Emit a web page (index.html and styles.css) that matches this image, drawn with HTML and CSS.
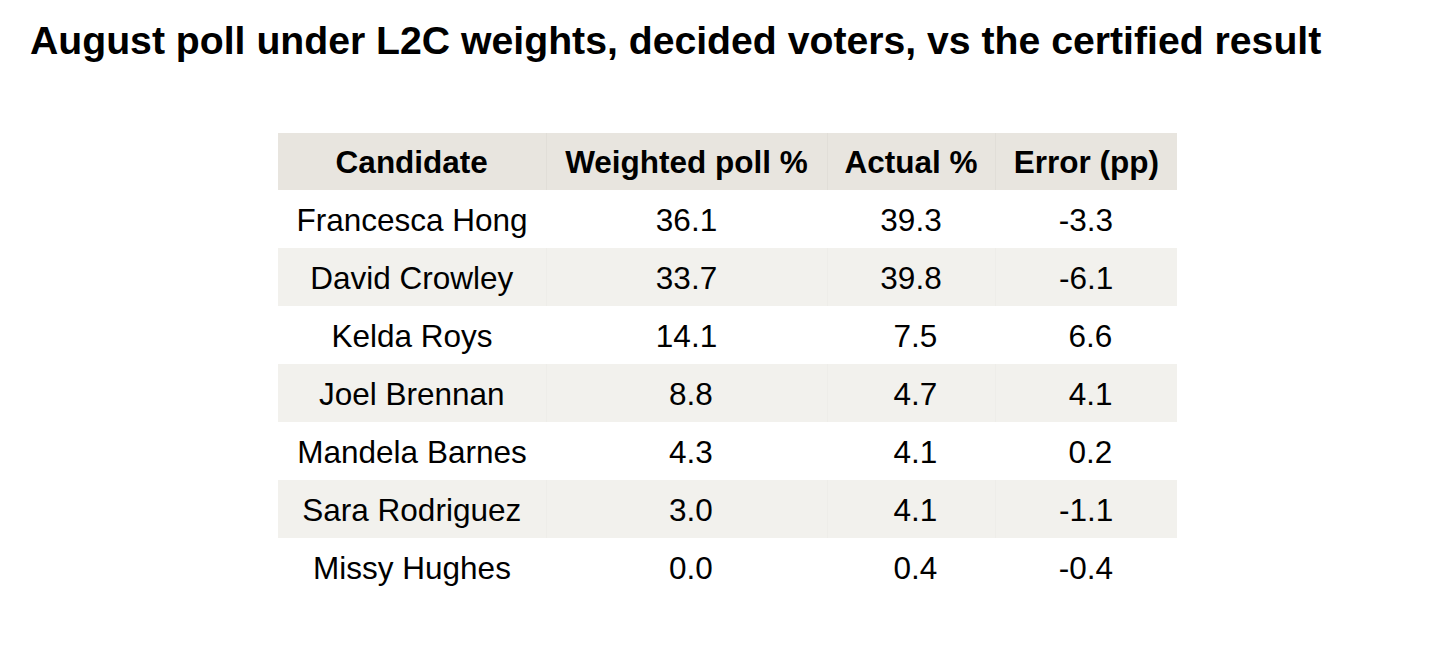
FILE: index.html
```html
<!DOCTYPE html>
<html lang="en">
<head>
<meta charset="utf-8">
<title>August poll under L2C weights</title>
<link rel="stylesheet" href="styles.css">
</head>
<body>
<h1 class="title">August poll under L2C weights, decided voters, vs the certified result</h1>
<table class="results">
  <colgroup>
    <col class="c-name">
    <col class="c-poll">
    <col class="c-actual">
    <col class="c-error">
  </colgroup>
  <thead>
    <tr><th>Candidate</th><th>Weighted poll %</th><th>Actual %</th><th>Error (pp)</th></tr>
  </thead>
  <tbody>
    <tr><td>Francesca Hong</td><td>36.1</td><td>39.3</td><td>-3.3</td></tr>
    <tr><td>David Crowley</td><td>33.7</td><td>39.8</td><td>-6.1</td></tr>
    <tr><td>Kelda Roys</td><td>14.1</td><td>&nbsp;7.5</td><td>&nbsp;6.6</td></tr>
    <tr><td>Joel Brennan</td><td>&nbsp;8.8</td><td>&nbsp;4.7</td><td>&nbsp;4.1</td></tr>
    <tr><td>Mandela Barnes</td><td>&nbsp;4.3</td><td>&nbsp;4.1</td><td>&nbsp;0.2</td></tr>
    <tr><td>Sara Rodriguez</td><td>&nbsp;3.0</td><td>&nbsp;4.1</td><td>-1.1</td></tr>
    <tr><td>Missy Hughes</td><td>&nbsp;0.0</td><td>&nbsp;0.4</td><td>-0.4</td></tr>
  </tbody>
</table>
</body>
</html>
```
FILE: styles.css
```css
html, body {
  margin: 0;
  padding: 0;
  background: #ffffff;
}
body {
  font-family: "Liberation Sans", Arial, Helvetica, sans-serif;
  color: #000;
}
.title {
  margin: 0;
  padding: 17px 0 0 30px;
  font-size: 39.2px;
  line-height: 48px;
  font-weight: 700;
  letter-spacing: 0;
}
.results {
  margin: 68px 0 0 278px;
  border-collapse: collapse;
  table-layout: fixed;
  width: 899px;
  font-size: 31.5px;
}
.c-name { width: 268px; }
.c-poll { width: 281px; }
.c-actual { width: 168px; }
.c-error { width: 182px; }
.results th, .results td {
  height: 58px;
  padding: 2px 0 0;
  box-sizing: border-box;
  text-align: center;
  vertical-align: middle;
  white-space: pre;
}
.results th {
  font-weight: 700;
  background: #e8e5df;
  height: 57px;
}
.results th + th {
  border-left: 1px solid #e1ded8;
}
.results tbody tr:nth-child(even) td {
  background: #f2f1ed;
}
.results tbody tr:nth-child(even) td + td {
  border-left: 1px solid #eeede9;
}
```
